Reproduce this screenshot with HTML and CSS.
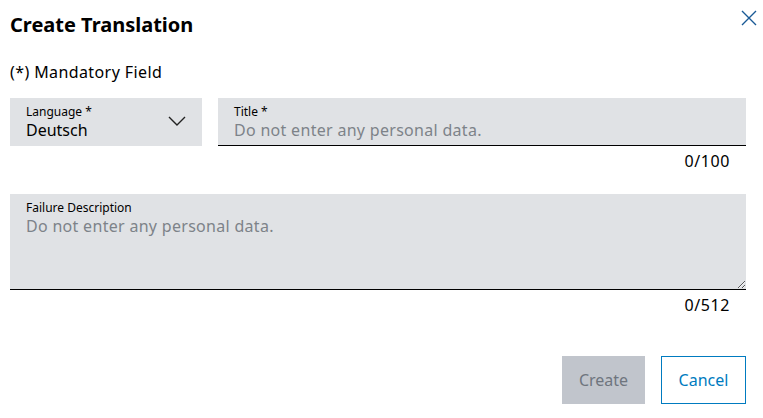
FILE: index.html
```html
<!DOCTYPE html>
<html>
<head>
<meta charset="utf-8">
<link rel="stylesheet" href="styles.css">
</head>
<body>
<div class="dialog">
  <div class="header">
    <h1 class="title">Create Translation</h1>
    <button class="close" aria-label="Close">
      <svg width="16" height="16" viewBox="0 0 16 16"><path d="M1 1 L15 15 M15 1 L1 15" stroke="#1a5a96" stroke-width="1.4" fill="none"/></svg>
    </button>
  </div>
  <p class="mandatory">(*) Mandatory Field</p>
  <div class="row">
    <div class="select">
      <div class="field-text">
        <span class="label">Language *</span>
        <span class="value">Deutsch</span>
      </div>
      <svg class="chev" width="18" height="10" viewBox="0 0 18 10"><path d="M1 1 L9 9 L17 1" stroke="#222" stroke-width="1.4" fill="none"/></svg>
    </div>
    <div class="input-col">
      <div class="input">
        <span class="label">Title *</span>
        <span class="placeholder">Do not enter any personal data.</span>
      </div>
      <div class="counter">0/100</div>
    </div>
  </div>
  <div class="textarea-wrap">
    <span class="label">Failure Description</span>
    <textarea class="ta" placeholder="Do not enter any personal data."></textarea>
  </div>
  <div class="counter">0/512</div>
  <div class="actions">
    <button class="btn btn-primary" disabled>Create</button>
    <button class="btn btn-secondary">Cancel</button>
  </div>
</div>
</body>
</html>
```
FILE: styles.css
```css
* { box-sizing: border-box; }
body {
  margin: 0;
  font-family: "Noto Sans", "Open Sans", sans-serif;
  color: #000;
  background: #fff;
}
.dialog {
  padding: 0 17px 0 10px;
  width: 763px;
}
.header {
  display: flex;
  justify-content: space-between;
  align-items: flex-start;
  height: 58px;
}
.title {
  margin: 11px 0 0;
  font-size: 20px;
  font-weight: 700;
  line-height: 28px;
}
.close {
  border: 0;
  background: none;
  padding: 0;
  margin: 10px -11px 0 0;
  width: 16px;
  height: 16px;
  cursor: pointer;
}
.close svg { display: block; }
.mandatory {
  margin: 0;
  font-size: 16px;
  letter-spacing: 0.4px;
  line-height: 24px;
  height: 40px;
  padding-top: 2px;
}
.row {
  display: flex;
  gap: 16px;
}
.select {
  width: 192px;
  height: 48px;
  background: #e0e2e5;
  display: flex;
  align-items: center;
  justify-content: space-between;
  padding: 0 16px;
}
.field-text, .input {
  display: flex;
  flex-direction: column;
}
.label {
  font-size: 12px;
  line-height: 16px;
  color: #000;
}
.value {
  font-size: 16px;
  line-height: 20px;
}
.chev { margin-top: -2px; }
.input-col {
  flex: 1;
}
.input {
  height: 48px;
  background: #e0e2e5;
  border-bottom: 1px solid #000;
  padding: 6px 16px 0;
}
.placeholder {
  font-size: 16px;
  letter-spacing: 0.3px;
  line-height: 20px;
  color: #7d8389;
}
.counter {
  text-align: right;
  font-size: 16px;
  letter-spacing: 0.6px;
  line-height: 20px;
  padding: 5px 16px 0 0;
  height: 48px;
}
.textarea-wrap {
  height: 96px;
  background: #e0e2e5;
  border-bottom: 1px solid #000;
  padding: 6px 0 0 16px;
  display: flex;
  flex-direction: column;
}
.ta {
  flex: 1;
  border: 0;
  background: transparent;
  font-family: inherit;
  font-size: 16px;
  letter-spacing: 0.3px;
  line-height: 20px;
  padding: 0;
  margin: 0;
  resize: vertical;
  outline: none;
}
.ta::placeholder { color: #7d8389; }
.actions {
  display: flex;
  justify-content: flex-end;
  gap: 16px;
  margin-top: 18px;
}
.btn {
  height: 48px;
  font-family: inherit;
  font-size: 16px;
  padding: 0 16px;
  background: #fff;
}
.btn-primary {
  background: #c1c5cc;
  color: #6f757e;
  border: 0;
  width: 83px;
}
.btn-secondary {
  border: 1px solid #007bc0;
  color: #007bc0;
  width: 85px;
}
```
